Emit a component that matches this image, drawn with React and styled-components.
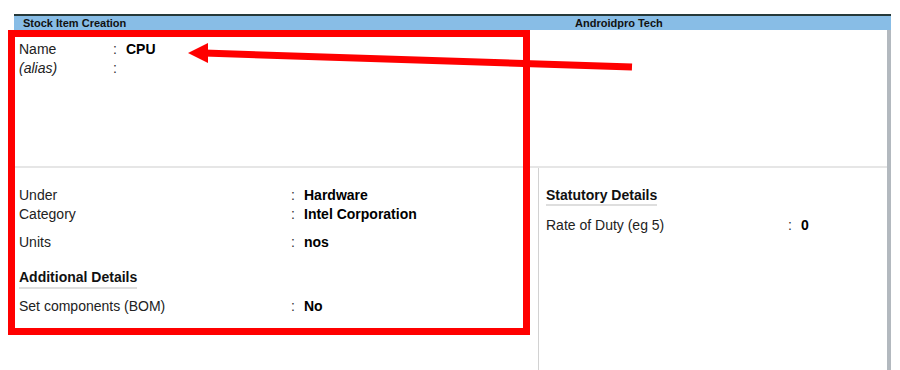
import React from 'react';
import styled, { createGlobalStyle } from 'styled-components';

const GlobalStyle = createGlobalStyle`
    html, body {
        margin: 0;
        padding: 0;
        background: #fff;
    }
    body {
        font-family: "Liberation Sans", Arial, sans-serif;
        color: #1a1a1a;
    }
`;

const Page = styled.div`
    position: relative;
    width: 900px;
    height: 370px;
    padding: 14px 9px 0 14px;
    box-sizing: border-box;
    overflow: hidden;
`;

const Window = styled.div`
    width: 877px;
    display: flex;
    flex-direction: column;
`;

const TitleBar = styled.div`
    display: flex;
    align-items: center;
    height: 14px;
    border-top: 2px solid #26393a;
    background: #88bde6;
    font-size: 11px;
    font-weight: bold;
    line-height: 14px;
    color: #111;
`;

const ScreenTitle = styled.div`
    flex: 0 0 552px;
    padding-left: 9px;
`;

const Company = styled.div`
    flex: 1;
`;

const Body = styled.div`
    height: 340px;
    display: flex;
    flex-direction: column;
    background: #fff;
    border-right: 4px solid #b3b9bf;
`;

const TopSection = styled.div`
    height: 138px;
    padding: 10px 0 0 5px;
    box-sizing: border-box;
    border-bottom: 2px solid #e6e6e6;
`;

const BottomSection = styled.div`
    flex: 1;
    display: grid;
    grid-template-columns: 524px 1fr;
`;

const Column = styled.div`
    padding: 18px 0 0 ${p => p.$pad}px;
    border-left: ${p => (p.$divider ? '1px solid #d2d2d2' : 'none')};
`;

const Row = styled.div`
    display: grid;
    grid-template-columns: ${p => p.$label}px 13px auto;
    font-size: 14px;
    line-height: 19px;
    margin-top: ${p => p.$gap || 0}px;
`;

const Label = styled.span`
    color: #222;
    font-style: ${p => (p.$italic ? 'italic' : 'normal')};
`;

const Colon = styled.span`
    color: #333;
`;

const Value = styled.span`
    font-weight: bold;
    color: #000;
`;

const Heading = styled.div`
    display: inline-block;
    font-size: 14px;
    font-weight: bold;
    line-height: ${p => p.$lh}px;
    color: #111;
    border-bottom: 2px solid #dedede;
    margin-top: ${p => p.$gap || 0}px;
`;

const Annotation = styled.div`
    position: absolute;
    left: 8px;
    top: 30px;
    width: 522px;
    height: 305px;
    box-sizing: border-box;
    border: 7px solid #ff0000;
    pointer-events: none;
`;

const ArrowLayer = styled.svg`
    position: absolute;
    left: 0;
    top: 0;
    pointer-events: none;
`;

function Field({ label, value, width, gap, italic }) {
    return (
        <Row $label={width} $gap={gap}>
            <Label $italic={italic}>{label}</Label>
            <Colon>:</Colon>
            <Value>{value}</Value>
        </Row>
    );
}

export default function App() {
    return (
        <Page>
            <GlobalStyle />
            <Window>
                <TitleBar>
                    <ScreenTitle>Stock Item Creation</ScreenTitle>
                    <Company>Androidpro Tech</Company>
                </TitleBar>
                <Body>
                    <TopSection>
                        <Field label="Name" value="CPU" width={94} />
                        <Field label="(alias)" value="" width={94} italic />
                    </TopSection>
                    <BottomSection>
                        <Column $pad={5}>
                            <Field label="Under" value="Hardware" width={272} />
                            <Field label="Category" value="Intel Corporation" width={272} />
                            <Field label="Units" value="nos" width={272} gap={9} />
                            <Heading $lh={19} $gap={16}>Additional Details</Heading>
                            <Field label="Set components (BOM)" value="No" width={272} gap={8} />
                        </Column>
                        <Column $pad={7} $divider>
                            <Heading $lh={17} $gap={0}>Statutory Details</Heading>
                            <Field label="Rate of Duty (eg 5)" value="0" width={242} gap={10} />
                        </Column>
                    </BottomSection>
                </Body>
            </Window>
            <Annotation />
            <ArrowLayer width="900" height="370" viewBox="0 0 900 370">
                <line x1="632" y1="67" x2="204" y2="53" stroke="#ff0000" strokeWidth="7" />
                <polygon points="188,53 208,43 208,63" fill="#ff0000" />
            </ArrowLayer>
        </Page>
    );
}
